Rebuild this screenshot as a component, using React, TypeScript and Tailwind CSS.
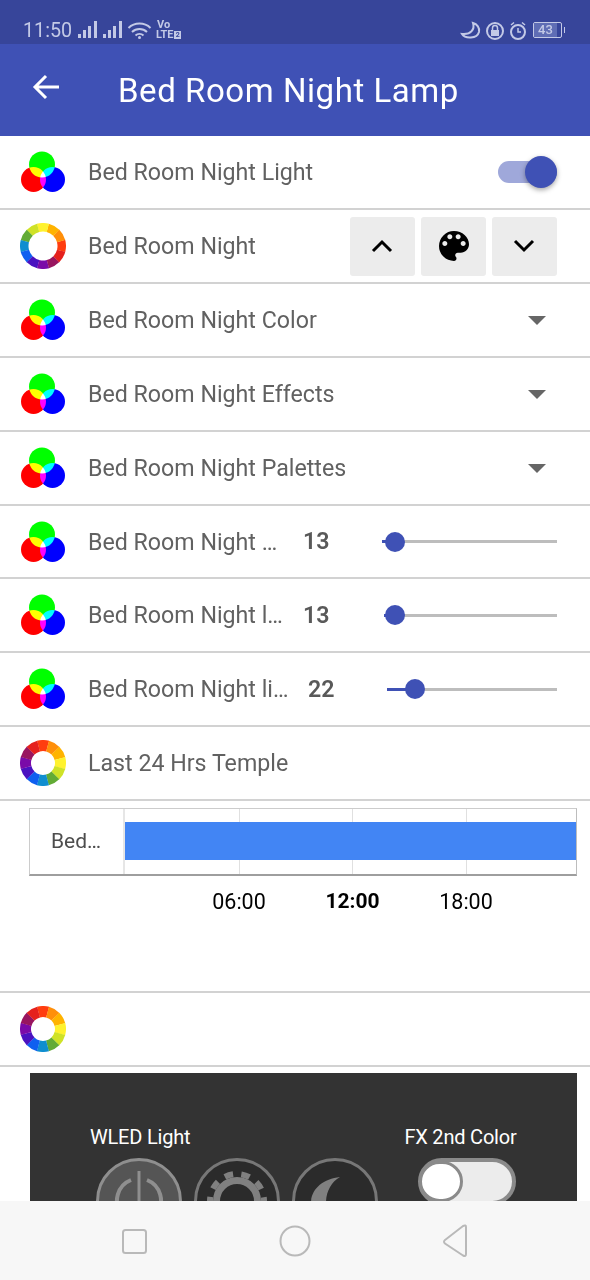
import React from 'react';

const FONT = "font-['Roboto','Liberation_Sans',sans-serif]";

const WHEEL_COLORS = ['#ff3d0f', '#ff8f0a', '#ffb300', '#fff22e', '#cfe227', '#62ab35', '#0f8ed0', '#0f5ff0', '#4a12c0', '#7a0aa8', '#98155f', '#e5211d'];

const RgbIcon = () => (
  <svg width="44" height="42" viewBox="0 0 44 42" className="shrink-0">
    <g className="isolate">
      <circle cx="21" cy="13.5" r="13" fill="#00ff00" className="mix-blend-screen" />
      <circle cx="12.5" cy="28.5" r="12.5" fill="#ff0000" className="mix-blend-screen" />
      <circle cx="31.5" cy="28.5" r="12.5" fill="#0000ff" className="mix-blend-screen" />
    </g>
  </svg>
);

const ColorWheel = ({ mirrored = false }: { mirrored?: boolean }) => {
  const arc = (i: number) => {
    const a0 = ((i * 30 - 15 - 90) * Math.PI) / 180;
    const a1 = ((i * 30 + 15.5 - 90) * Math.PI) / 180;
    const R = 23;
    const r = mirrored ? 14.5 : 12;
    const p = (rad: number, a: number) => `${(23 + rad * Math.cos(a)).toFixed(2)} ${(23 + rad * Math.sin(a)).toFixed(2)}`;
    return `M${p(R, a0)}A${R} ${R} 0 0 1 ${p(R, a1)}L${p(r, a1)}A${r} ${r} 0 0 0 ${p(r, a0)}Z`;
  };
  return (
    <svg width="46" height="46" viewBox="0 0 46 46" className="shrink-0 -mx-px">
      <g transform={mirrored ? 'rotate(90 23 23) translate(46 0) scale(-1 1)' : undefined}>
        {WHEEL_COLORS.map((c, i) => (
          <path key={i} d={arc(i)} fill={c} />
        ))}
      </g>
    </svg>
  );
};

const Row = ({ children, className = 'h-[74px]' }: { children: React.ReactNode; className?: string }) => (
  <div className={`pl-[21px] pr-[33px] flex items-center border-b-2 border-[#d2d2d2] bg-white ${className}`}>{children}</div>
);

const Label = ({ children, className = '' }: { children?: React.ReactNode; className?: string }) => (
  <span className={`text-[23.2px] leading-none text-[#616161] ml-[23px] mt-[2px] whitespace-nowrap ${className}`}>{children}</span>
);

const IconButton = ({ children }: { children: React.ReactNode }) => (
  <div className="w-[65px] h-[59px] bg-[#ececec] rounded-[3px] flex items-center justify-center">{children}</div>
);

const DropdownRow = ({ label }: { label: string }) => (
  <Row>
    <RgbIcon />
    <Label className="flex-1">{label}</Label>
    <div className="mr-[11px] w-0 h-0 border-x-[9px] border-x-transparent border-t-[9px] border-t-[#666666]" />
  </Row>
);

const SliderRow = ({ label, labelWidth, value, valueGap, track, fill, thumb, className }: { label: string; labelWidth: string; value: number; valueGap: string; track: string; fill: string; thumb: string; className?: string }) => (
  <Row className={className}>
    <RgbIcon />
    <Label className={labelWidth}>{label}</Label>
    <span className={`text-[23.2px] leading-none font-semibold text-[#595959] mt-[1px] ${valueGap}`}>{value}</span>
    <div className={`relative h-[3px] bg-[#bdbdbd] ml-auto ${track}`}>
      <div className={`absolute left-0 top-0 h-[3px] bg-[#3f51b5] ${fill}`} />
      <div className={`absolute top-[-8.5px] w-5 h-5 rounded-full bg-[#3f51b5] ${thumb}`} />
    </div>
  </Row>
);

const StatusBar = () => (
  <div className="h-[44px] bg-[#37459a] relative text-[#c3c9e6]">
    <span className="absolute left-[23px] top-[20px] text-[19.7px] leading-[22px]">11:50</span>
    <svg width="78" height="24" viewBox="0 0 78 24" className="absolute left-[78px] top-[18px]" fill="currentColor">
      <rect x="0" y="16" width="3" height="4" />
      <rect x="5" y="12" width="3" height="8" />
      <rect x="10" y="8" width="3" height="12" />
      <rect x="16" y="3" width="3" height="17" />
      <rect x="25" y="16" width="3" height="4" />
      <rect x="30" y="12" width="3" height="8" />
      <rect x="35" y="8" width="3" height="12" />
      <rect x="41" y="3" width="3" height="17" />
      <path d="M50.500 10a16 16 0 0 1 22 0M54 14a11 11 0 0 1 15 0M57.500 17.500a6 6 0 0 1 8 0" fill="none" stroke="currentColor" strokeWidth="2" />
      <circle cx="61.500" cy="19.500" r="1.500" />
    </svg>
    <div className="absolute left-[156px] top-[20px] text-[11px] leading-[10px] font-bold">
      <div className="pl-[1px]">Vo</div>
      <div className="flex items-center tracking-[-0.2px]">
        LTE
        <span className="ml-[1px] w-[7px] h-[8px] bg-[#c3c9e6] text-[#37459a] text-[7px] leading-[8px] text-center">2</span>
      </div>
    </div>
    <svg width="72" height="24" viewBox="0 0 72 24" className="absolute left-[460px] top-[19px]" fill="none" stroke="currentColor" strokeWidth="2">
      <path d="M13 4c2 6-2 12-11 11 3 5 15 5 17-2 1-4-2-8-6-9z" />
      <circle cx="35" cy="12" r="8" />
      <rect x="31" y="11" width="8" height="6" fill="currentColor" stroke="none" />
      <path d="M32.500 11V9a2.500 2.500 0 0 1 5 0v2" strokeWidth="1.500" />
      <circle cx="58" cy="13" r="7" />
      <path d="M58 9v4h3M51 6l3-2.500M65 6l-3-2.500" strokeWidth="1.500" />
    </svg>
    <div className="absolute left-[533px] top-[22px] w-[29px] h-[16px] border border-[#c3c9e6] rounded-[2px] text-[13px] leading-[14px] font-medium text-center">
      <div className="w-[23px] bg-[#5f6db5]">43</div>
    </div>
    <div className="absolute left-[564px] top-[27px] w-[1px] h-[6px] bg-[#c3c9e6]" />
  </div>
);

const AppBar = () => (
  <div className="h-[92px] bg-[#3f51b5] flex items-center text-white">
    <svg width="28" height="28" viewBox="0 0 28 28" fill="none" stroke="white" strokeWidth="3" className="ml-[32px] -mt-[6px]">
      <path d="M27 14H3M14 3L3 14l11 11" />
    </svg>
    <span className="ml-[58px] text-[33px] leading-none tracking-[0.55px]">Bed Room Night Lamp</span>
  </div>
);

const Chevron = ({ d }: { d: string }) => (
  <svg width="22" height="14" viewBox="0 0 22 14" fill="none" stroke="black" strokeWidth="3" className="-ml-[2px]">
    <path d={d} />
  </svg>
);

const Chart = () => (
  <div className="h-[192px] border-b-2 border-[#d2d2d2] pt-[7px] bg-white">
    <div className="ml-[29px] w-[548px] h-[68px] flex border border-[#cccccc] border-b-2 border-b-[#9e9e9e] border-r-[#bdbdbd]">
      <div className="w-[95px] flex items-center pl-[21px] text-[21px] text-[#4d4d4d] border-r-2 border-[#e6e6e6] shrink-0">Bed…</div>
      <div className="relative flex-1 grid grid-cols-[115px_113px_114px_1fr]">
        <div className="border-r border-[#e0e0e0]" />
        <div className="border-r border-[#e0e0e0]" />
        <div className="border-r border-[#e0e0e0]" />
        <div />
        <div className="absolute left-0 right-0 top-[13px] h-[38px] bg-[#4285f4]" />
      </div>
    </div>
    <div className="flex ml-[182px] mt-[13px] text-[21.500px] leading-[25px] text-black">
      <span className="w-[114px] text-center">06:00</span>
      <span className="w-[113px] text-center font-bold text-[21px]">12:00</span>
      <span className="w-[114px] text-center">18:00</span>
    </div>
  </div>
);

const WledPanel = () => (
  <div className="pt-[6px] pl-[30px] bg-white">
    <div className="w-[547px] h-[200px] bg-[#333333] text-white relative">
      <div className="flex pt-[50px] text-[20px] leading-[28px] tracking-[-0.2px]">
        <span className="ml-[60px]">WLED Light</span>
        <span className="ml-[214px]">FX 2nd Color</span>
      </div>
      <div className="flex items-start mt-[7px] ml-[66px] gap-[12px]">
        <div className="w-[86px] h-[86px] rounded-full border-[3px] border-[#8f8f8f] bg-[#555555] flex items-center justify-center">
          <svg width="66" height="66" viewBox="0 0 66 66" fill="none" stroke="#8f8f8f" strokeWidth="4">
            <path d="M33 3v34" strokeWidth="3" />
            <path d="M25 12a22 22 0 1 0 16 0" />
          </svg>
        </div>
        <div className="w-[86px] h-[86px] rounded-full border-[3px] border-[#777777] bg-[#2b2b2b] flex items-center justify-center">
          <svg width="66" height="66" viewBox="0 0 66 66" fill="none" stroke="#808080">
            <circle cx="33" cy="33" r="20.500" strokeWidth="7" />
            <circle cx="33" cy="33" r="27" strokeWidth="6" strokeDasharray="8.500 8.460" strokeDashoffset="4.500" />
          </svg>
        </div>
        <div className="w-[86px] h-[86px] rounded-full border-[3px] border-[#777777] bg-[#2b2b2b] flex items-center justify-center">
          <svg width="60" height="60" viewBox="0 0 60 60" fill="#808080">
            <path d="M35 6C18 8 6 18 6 32c0 14 12 24 28 24-8-5-13-14-13-24 0-11 5-21 14-26z" />
          </svg>
        </div>
        <div className="ml-[28px] w-[98px] h-[47px] rounded-full border-[4px] border-[#8a8a8a] bg-[#ececec] relative">
          <div className="absolute -left-[3px] -top-[1px] w-[44px] h-[41px] rounded-full bg-white border-[3px] border-[#8a8a8a]" />
        </div>
      </div>
    </div>
  </div>
);

const NavBar = () => (
  <div className="h-[79px] bg-[#f7f7f7] flex items-center shrink-0 relative z-10">
    <svg width="590" height="79" viewBox="0 0 590 79" fill="none" stroke="#b9b9b9" strokeWidth="2">
      <rect x="123" y="29" width="23" height="23" rx="2.500" />
      <circle cx="295" cy="40" r="14.500" />
      <path d="M466 26v27q0 3-3 1.500l-18-12q-2-2 0-3.500l18-14q3-1.500 3 1z" />
    </svg>
  </div>
);

export default function App() {
  return (
    <div className={`${FONT} w-[590px] h-[1280px] flex flex-col overflow-hidden bg-white`}>
      <div className="flex-1 min-h-0 overflow-hidden">
        <StatusBar />
        <AppBar />
        <Row>
          <RgbIcon />
          <Label className="flex-1">Bed Room Night Light</Label>
          <div className="relative w-[59px] h-[22px] rounded-full bg-[#9fa8da]">
            <div className="absolute left-[27px] -top-[5px] w-8 h-8 rounded-full bg-[#3f51b5] shadow-[0_2px_5px_rgba(0,0,0,0.35)]" />
          </div>
        </Row>
        <Row>
          <ColorWheel mirrored />
          <Label className="flex-1">Bed Room Night</Label>
          <div className="flex gap-[6px]">
            <IconButton>
              <Chevron d="M2 12L11 3l9 9" />
            </IconButton>
            <IconButton>
              <svg width="40" height="40" viewBox="0 0 24 24" fill="black">
                <path d="M12 3a9 9 0 0 0 0 18c.83 0 1.5-.67 1.5-1.5 0-.39-.15-.74-.39-1.01-.23-.26-.38-.61-.38-.99 0-.83.67-1.5 1.5-1.5H16c2.76 0 5-2.24 5-5 0-4.42-4.03-8-9-8zm-5.5 9c-.83 0-1.5-.67-1.5-1.500S5.670 9 6.500 9 8 9.670 8 10.500 7.330 12 6.500 12zm3-4C8.670 8 8 7.330 8 6.500S8.670 5 9.500 5s1.500.670 1.500 1.500S10.330 8 9.500 8zm5 0c-.830 0-1.500-.670-1.500-1.500S13.670 5 14.500 5s1.500.670 1.500 1.500S15.330 8 14.500 8zm3 4c-.830 0-1.500-.670-1.500-1.500S16.670 9 17.500 9s1.500.670 1.500 1.500-.670 1.500-1.500 1.500z" />
              </svg>
            </IconButton>
            <IconButton>
              <Chevron d="M2 2l9 9 9-9" />
            </IconButton>
          </div>
        </Row>
        <DropdownRow label="Bed Room Night Color" />
        <DropdownRow label="Bed Room Night Effects" />
        <DropdownRow label="Bed Room Night Palettes" />
        <SliderRow className="h-[73px]" label="Bed Room Night …" labelWidth="w-[193px]" value={13} valueGap="ml-[22px]" track="w-[175px]" fill="w-[12px]" thumb="left-[3px]" />
        <SliderRow className="h-[74px]" label="Bed Room Night l…" labelWidth="w-[193px]" value={13} valueGap="ml-[22px]" track="w-[173px]" fill="w-[10px]" thumb="left-[1px]" />
        <SliderRow className="h-[74px]" label="Bed Room Night li…" labelWidth="w-[200px]" value={22} valueGap="ml-[20px]" track="w-[170px]" fill="w-[28px]" thumb="left-[18px]" />
        <Row>
          <ColorWheel />
          <Label>Last 24 Hrs Temple</Label>
        </Row>
        <Chart />
        <Row>
          <ColorWheel />
        </Row>
        <WledPanel />
      </div>
      <NavBar />
    </div>
  );
}
